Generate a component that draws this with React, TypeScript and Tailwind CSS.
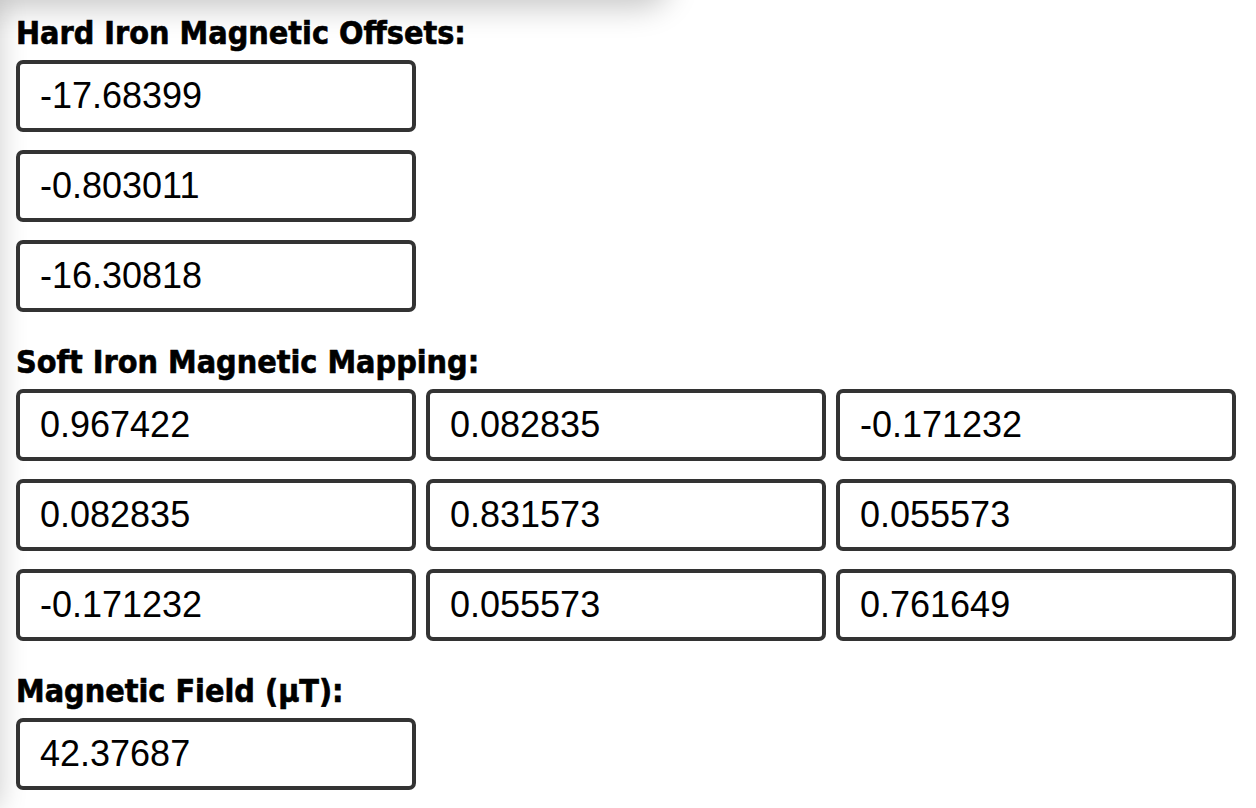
import { useState } from "react";

const headingFont = { fontFamily: '"DejaVu Sans Condensed", "DejaVu Sans", sans-serif' };

interface FieldProps {
  value: string;
  onChange: (v: string) => void;
}

// single numeric box, same look for every value on the page
const Field = ({ value, onChange }: FieldProps) => (
  <input
    type="text"
    value={value}
    onChange={(e) => onChange(e.target.value)}
    className="h-[72px] w-[400px] rounded-[7px] border-[4px] border-[#333333] bg-white pl-[20px] text-[36px] text-black outline-none font-['Liberation_Sans',Arial,sans-serif]"
  />
);

const Heading = ({ children }: { children: React.ReactNode }) => (
  <div
    style={headingFont}
    className="mb-[11px] text-[32px] font-bold leading-[32px] text-black [-webkit-text-stroke:0.6px_black]"
  >
    {children}
  </div>
);

export default function App() {
  const [hardIron, setHardIron] = useState(["-17.68399", "-0.803011", "-16.30818"]);
  const [softIron, setSoftIron] = useState([
    "0.967422", "0.082835", "-0.171232",
    "0.082835", "0.831573", "0.055573",
    "-0.171232", "0.055573", "0.761649",
  ]);
  const [field, setField] = useState("42.37687");

  const updateAt = (list: string[], i: number, v: string) =>
    list.map((x, idx) => (idx === i ? v : x));

  return (
    <div className="relative h-[808px] w-[1256px] overflow-hidden bg-white">
      {/* shadows cast by panels just outside the crop */}
      <div className="absolute -left-[40px] -top-[56px] h-[56px] w-[710px] rounded-[40px] bg-white shadow-[0_8px_30px_rgba(0,0,0,0.22)]" />
      <div className="absolute -left-[40px] top-0 h-full w-[40px] bg-white shadow-[0_0_28px_rgba(0,0,0,0.2)]" />

      <div className="relative pl-[16px] pt-[17px]">
        <Heading>Hard Iron Magnetic Offsets:</Heading>
        <div className="flex flex-col gap-[18px]">
          {hardIron.map((v, i) => (
            <Field key={i} value={v} onChange={(nv) => setHardIron(updateAt(hardIron, i, nv))} />
          ))}
        </div>

        <div className="mt-[34px]">
          <Heading>Soft Iron Magnetic Mapping:</Heading>
          <div className="grid grid-cols-[400px_400px_400px] gap-x-[10px] gap-y-[18px]">
            {softIron.map((v, i) => (
              <Field key={i} value={v} onChange={(nv) => setSoftIron(updateAt(softIron, i, nv))} />
            ))}
          </div>
        </div>

        <div className="mt-[34px]">
          <Heading>Magnetic Field (µT):</Heading>
          <Field value={field} onChange={setField} />
        </div>
      </div>
    </div>
  );
}
